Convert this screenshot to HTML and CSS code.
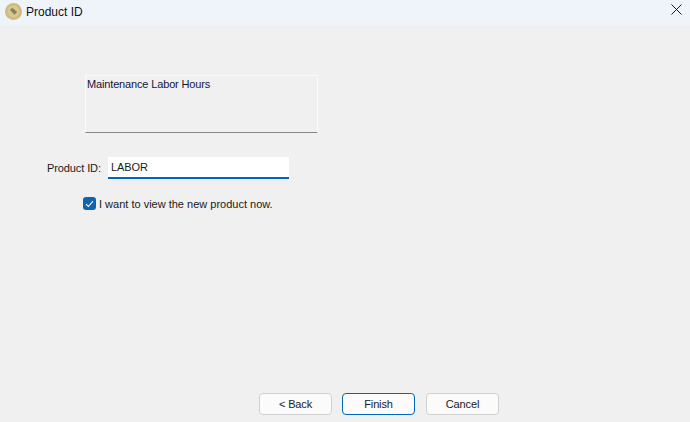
FILE: index.html
```html
<!DOCTYPE html>
<html lang="en">
<head>
<meta charset="utf-8">
<title>Product ID</title>
<link rel="stylesheet" href="styles.css">
</head>
<body>
<div class="window">
  <header class="titlebar">
    <div class="app-icon">
      <svg width="17" height="17" viewBox="0 0 17 17"><circle cx="8.5" cy="8.5" r="8.5" fill="#cdbb7d"/><circle cx="8.5" cy="8.5" r="6" fill="#d8c98f"/><path d="M5 7l2.2-2.2 5 4.2-2.7 2.8z" fill="#8a8060"/></svg>
    </div>
    <span class="title">Product ID</span>
    <button class="close" aria-label="Close">
      <svg width="11" height="11" viewBox="0 0 11 11"><path d="M.5.5l10 10M10.5.5l-10 10" stroke="#1a1a1a" stroke-width="1" fill="none"/></svg>
    </button>
  </header>
  <main class="content">
    <div class="description">Maintenance Labor Hours</div>
    <div class="field-row">
      <label class="field-label">Product ID:</label>
      <div class="text-input">LABOR</div>
    </div>
    <div class="check-row">
      <span class="checkbox">
        <svg width="9" height="8" viewBox="0 0 9 8"><path d="M1 4.2l2.4 2.3L8 1.2" stroke="#fff" stroke-width="1.1" fill="none"/></svg>
      </span>
      <span>I want to view the new product now.</span>
    </div>
  </main>
  <footer class="actions">
    <button class="btn">&lt; Back</button>
    <button class="btn primary">Finish</button>
    <button class="btn">Cancel</button>
  </footer>
</div>
</body>
</html>
```
FILE: styles.css
```css
* { box-sizing: border-box; }
html, body { margin: 0; padding: 0; }
body { width: 690px; height: 422px; overflow: hidden; font-family: "Liberation Sans", Arial, sans-serif; font-size: 11px; color: #1a1a1a; background: #f0f0f0; }
.window { width: 690px; height: 422px; display: flex; flex-direction: column; }
.titlebar { height: 25px; flex: none; display: flex; align-items: center; background: #eff4fa; padding-left: 5px; }
.app-icon { width: 17px; height: 17px; display: flex; margin: -3px 4px 0 0; }
.title { font-size: 12px; color: #111; margin-top: -2px; }
.close { margin-left: auto; width: 46px; height: 25px; padding: 0 0 6px 19px; border: 0; background: none; display: flex; align-items: center; justify-content: center; }
.content { flex: 1; display: flex; flex-direction: column; align-items: flex-start; padding: 50px 0 0 47px; }
.description { width: 233px; height: 58px; margin-left: 38px; padding: 1px; border: 1px solid #fafafa; border-bottom: 1px solid #858585; color: #14143c; line-height: 14px; letter-spacing: -0.15px; }
.field-row { display: flex; align-items: center; margin-top: 24px; }
.field-label { width: 61px; letter-spacing: -0.1px; margin-top: -1px; }
.text-input { width: 181px; height: 22px; background: #fff; border-bottom: 2px solid #0067c0; padding: 2px 3px; line-height: 16px; letter-spacing: -0.1px; }
.check-row { display: flex; align-items: center; margin: 18px 0 0 36px; }
.checkbox { width: 13px; height: 13px; border-radius: 3px; background: #0f62b4; display: flex; align-items: center; justify-content: center; margin-right: 3px; }
.actions { flex: none; height: 29px; display: flex; gap: 10px; padding-left: 259px; }
.btn { width: 73px; height: 22px; border: 1px solid #d0d0d0; border-radius: 4px; background: #fbfbfb; font: 11px "Liberation Sans", Arial, sans-serif; letter-spacing: -0.15px; color: #1a1a1a; padding: 0; }
.btn.primary { border-color: #0067c0; margin-right: 1px; }
```
